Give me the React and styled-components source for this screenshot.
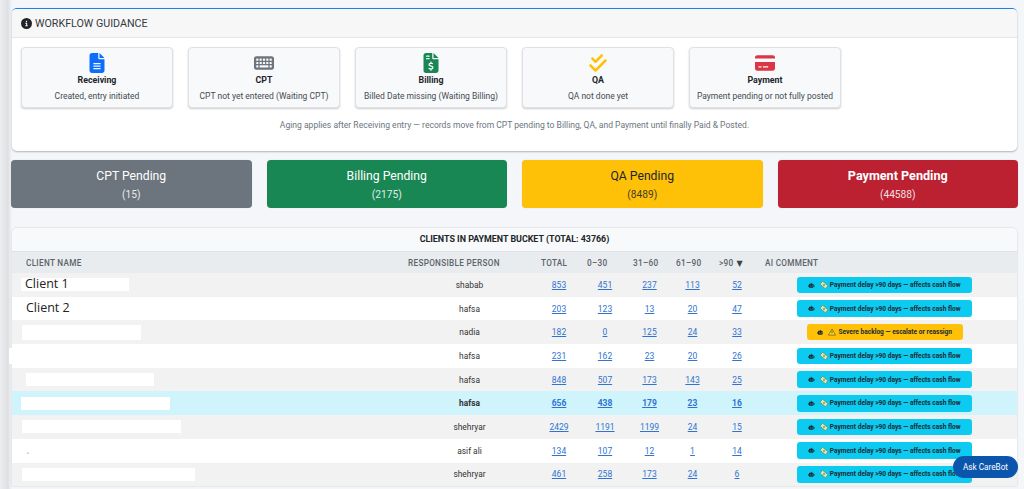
import React from "react";
import styled, { createGlobalStyle } from "styled-components";
import {
  FaCircleInfo,
  FaFileLines,
  FaKeyboard,
  FaFileInvoiceDollar,
  FaCheckDouble,
  FaCreditCard,
  FaRobot,
} from "react-icons/fa6";

const GlobalStyle = createGlobalStyle`
  html, body {
    margin: 0;
    height: 489px;
    overflow: hidden;
    background: #f4f6f9;
    font-family: Roboto, "Noto Sans", Arial, sans-serif;
    color: #212529;
  }
`;

const Page = styled.div`
  padding: 8px 6px 0 11px;
  height: 489px;
  box-sizing: border-box;
  background: linear-gradient(90deg, #eceef0 0, #dfe0e3 8px, #f4f6f9 12px);
`;

const GuideCard = styled.section`
  margin: 0 1px;
  height: 143px;
  box-sizing: border-box;
  background: #fff;
  border-top: 1.5px solid #1f7fec;
  border-radius: 5px;
  box-shadow: 0 1px 2px rgba(0, 0, 0, 0.28);
  overflow: hidden;
`;

const GuideHeader = styled.header`
  display: flex;
  align-items: center;
  gap: 3px;
  height: 28px;
  padding-left: 9px;
  background: #f7f7f8;
  border-bottom: 1px solid #e6e6e6;
  font-size: 10.7px;
  color: #343a40;
  svg {
    font-size: 11px;
    color: #212529;
  }
`;

const GuideBody = styled.div`
  padding: 9px;
`;

const Steps = styled.div`
  display: flex;
  gap: 15px;
`;

const Step = styled.div`
  width: 152px;
  height: 61px;
  box-sizing: border-box;
  padding-top: 5px;
  display: flex;
  flex-direction: column;
  align-items: center;
  background: #f8f9fa;
  border: 1px solid #dee2e6;
  border-radius: 4px;
  box-shadow: 0 1px 2px rgba(0, 0, 0, 0.2);
`;

const StepIcon = styled.div`
  height: 21px;
  font-size: 20px;
  line-height: 21px;
  color: ${(p) => p.$color};
`;

const StepTitle = styled.div`
  font-size: 8.8px;
  line-height: 13px;
  font-weight: 700;
`;

const StepText = styled.div`
  margin-top: 3px;
  font-size: 8.5px;
  line-height: 12px;
  color: #444b52;
  white-space: nowrap;
`;

const Note = styled.p`
  margin: 11px 0 0;
  text-align: center;
  font-size: 8.56px;
  line-height: 12px;
  color: #6c757d;
`;

const Tiles = styled.div`
  display: grid;
  grid-template-columns: repeat(4, 1fr);
  gap: 15px;
  margin-top: 9px;
`;

const Tile = styled.div`
  height: 48px;
  padding-top: 7px;
  box-sizing: border-box;
  text-align: center;
  border-radius: 4px;
  background: ${(p) => p.$bg};
  color: ${(p) => p.$fg};
  box-shadow: 0 0 1px rgba(0, 0, 0, 0.2);
`;

const TileTitle = styled.div`
  font-size: ${(p) => (p.$bold ? 12.6 : 12.2)}px;
  line-height: 18px;
  font-weight: ${(p) => (p.$bold ? 700 : 400)};
`;

const TileCount = styled.div`
  font-size: 10.2px;
  line-height: 20px;
  opacity: 0.85;
`;

const TableCard = styled.section`
  margin: 20px 1px 0;
  background: #fff;
  border-radius: 5px 5px 0 0;
  box-shadow: 0 0 2px rgba(0, 0, 0, 0.2);
`;

const TableTitle = styled.div`
  height: 23px;
  line-height: 23px;
  text-align: center;
  font-size: 8.9px;
  font-weight: 700;
  background: #f8f9fa;
  border-bottom: 1px solid #dee2e6;
  border-radius: 5px 5px 0 0;
`;

const Table = styled.table`
  width: 100%;
  table-layout: fixed;
  border-collapse: collapse;
`;

const HeadCell = styled.th`
  height: 21px;
  padding: 0 0 0 ${(p) => (p.$first ? 14 : 8)}px;
  text-align: left;
  background: #e9ecef;
  color: #5b636b;
  font-size: 8.2px;
  font-weight: 500;
  letter-spacing: 0.3px;
  white-space: nowrap;
`;

const SortArrow = styled.span`
  margin-left: 3px;
  font-family: "DejaVu Sans", sans-serif;
  font-size: 8px;
  color: #3d4349;
`;

const Row = styled.tr`
  height: 23.7px;
  background: ${(p) => (p.$active ? "#cff4fc" : p.$striped ? "#f2f2f2" : "#fff")};
  font-weight: ${(p) => (p.$active ? 700 : 400)};
`;

const NameCell = styled.td`
  padding: 0;
  overflow: visible;
`;

const Redacted = styled.div`
  box-sizing: border-box;
  width: ${(p) => p.$w}px;
  height: ${(p) => p.$h || 13}px;
  margin-left: ${(p) => p.$x}px;
  padding-left: ${(p) => p.$pad || 0}px;
  background: ${(p) => (p.$clear ? "transparent" : "#fff")};
  font-family: "Open Sans", "Noto Sans", sans-serif;
  font-size: 12.5px;
  line-height: 12px;
  color: ${(p) => p.$tint || "#222"};
  white-space: nowrap;
`;

const Person = styled.td`
  padding: 0 5px 0 11px;
  text-align: center;
  font-size: 8.4px;
  color: #333;
`;

const Num = styled.td`
  padding: 0 5px 0 11px;
  text-align: center;
  font-size: 8.5px;
`;

const NumLink = styled.a`
  color: #2f74d0;
  text-decoration: underline;
`;

const AiCell = styled.td`
  padding: 0 13px 0 8px;
`;

const Badge = styled.span`
  display: flex;
  align-items: center;
  justify-content: center;
  height: 16.5px;
  width: ${(p) => p.$w}px;
  margin: 0 auto;
  border-radius: 3px;
  background: ${(p) => p.$bg};
  color: #1b2b33;
  font-size: 6.6px;
  font-weight: 700;
  white-space: nowrap;
  svg {
    flex: none;
  }
`;

const Glyph = styled.span`
  display: flex;
  margin: 0 2px 0 5px;
`;

const AskBot = styled.button`
  position: fixed;
  left: 953px;
  top: 456px;
  width: 65px;
  height: 22px;
  padding: 0;
  border: none;
  border-radius: 11px;
  background: #0b55ad;
  color: #fff;
  font-family: inherit;
  font-size: 8.2px;
`;

const steps = [
  { title: "Receiving", text: "Created, entry initiated", color: "#0d6efd", Icon: FaFileLines },
  { title: "CPT", text: "CPT not yet entered (Waiting CPT)", color: "#6c757d", Icon: FaKeyboard },
  { title: "Billing", text: "Billed Date missing (Waiting Billing)", color: "#198754", Icon: FaFileInvoiceDollar },
  { title: "QA", text: "QA not done yet", color: "#ffc107", Icon: FaCheckDouble },
  { title: "Payment", text: "Payment pending or not fully posted", color: "#dc3545", Icon: FaCreditCard },
];

const tiles = [
  { title: "CPT Pending", count: 15, bg: "#6c757d", fg: "#fff" },
  { title: "Billing Pending", count: 2175, bg: "#198754", fg: "#fff" },
  { title: "QA Pending", count: 8489, bg: "#ffc107", fg: "#212529" },
  { title: "Payment Pending", count: 44588, bg: "#bb2130", fg: "#fff", bold: true },
];

const colWidths = [388, 133, 46, 46, 43, 43, 46, 260];
const headers = ["CLIENT NAME", "RESPONSIBLE PERSON", "TOTAL", "0–30", "31–60", "61–90", ">90", "AI COMMENT"];

const rows = [
  { name: "Client 1", x: 9, w: 108, pad: 4, person: "shabab", nums: [853, 451, 237, 113, 52] },
  { name: "Client 2", x: 14, w: 90, clear: true, person: "hafsa", nums: [203, 123, 13, 20, 47] },
  { x: 10, w: 119, h: 15, person: "nadia", nums: [182, 0, 125, 24, 33], severe: true },
  { x: -3, w: 120, h: 16, person: "hafsa", nums: [231, 162, 23, 20, 26] },
  { x: 14, w: 128, person: "hafsa", nums: [848, 507, 173, 143, 25] },
  { x: 9, w: 149, person: "hafsa", nums: [656, 438, 179, 23, 16], active: true },
  { x: 10, w: 159, person: "shehryar", nums: [2429, 1191, 1199, 24, 15] },
  { name: ".", tint: "#9ec5fe", x: 14, w: 10, clear: true, person: "asif ali", nums: [134, 107, 12, 1, 14] },
  { x: 10, w: 173, person: "shehryar", nums: [461, 258, 173, 24, 6] },
];

// small banknote standing in for the emoji in the comment badge
const MoneyGlyph = () => (
  <svg width="8" height="8" viewBox="0 0 8 8">
    <rect x="0.5" y="2" width="7" height="4" rx="0.5" transform="rotate(40 4 4)" fill="#e6e2b8" stroke="#5f8f66" strokeWidth="0.7" />
    <circle cx="4" cy="4" r="1" fill="#6fa56f" />
  </svg>
);

const WarnGlyph = () => (
  <svg width="8" height="8" viewBox="0 0 9 8">
    <path d="M4.5 0.6 8.5 7.5H0.5Z" fill="#ffd83d" stroke="#5c5200" strokeWidth="0.7" strokeLinejoin="round" />
    <path d="M4.5 2.8V5.2M4.5 5.9V6.6" stroke="#333" strokeWidth="0.8" />
  </svg>
);

const App = () => (
  <Page>
    <GlobalStyle />
    <GuideCard>
      <GuideHeader>
        <FaCircleInfo />
        WORKFLOW GUIDANCE
      </GuideHeader>
      <GuideBody>
        <Steps>
          {steps.map(({ title, text, color, Icon }) => (
            <Step key={title}>
              <StepIcon $color={color}>
                <Icon />
              </StepIcon>
              <StepTitle>{title}</StepTitle>
              <StepText>{text}</StepText>
            </Step>
          ))}
        </Steps>
        <Note>
          Aging applies after Receiving entry — records move from CPT pending to Billing, QA, and Payment until finally Paid &amp; Posted.
        </Note>
      </GuideBody>
    </GuideCard>

    <Tiles>
      {tiles.map((t) => (
        <Tile key={t.title} $bg={t.bg} $fg={t.fg}>
          <TileTitle $bold={t.bold}>{t.title}</TileTitle>
          <TileCount>({t.count})</TileCount>
        </Tile>
      ))}
    </Tiles>

    <TableCard>
      <TableTitle>CLIENTS IN PAYMENT BUCKET (TOTAL: 43766)</TableTitle>
      <Table>
        <colgroup>
          {colWidths.map((w, i) => (
            <col key={i} width={w} />
          ))}
        </colgroup>
        <thead>
          <tr>
            {headers.map((h, i) => (
              <HeadCell key={h} $first={i === 0}>
                {h}
                {h === ">90" && <SortArrow>▼</SortArrow>}
              </HeadCell>
            ))}
          </tr>
        </thead>
        <tbody>
          {rows.map((r, i) => (
            <Row key={i} $striped={i % 2 === 0} $active={r.active}>
              <NameCell>
                <Redacted $x={r.x} $w={r.w} $h={r.h} $pad={r.pad} $clear={r.clear} $tint={r.tint}>
                  {r.name}
                </Redacted>
              </NameCell>
              <Person>{r.person}</Person>
              {r.nums.map((n, j) => (
                <Num key={j}>
                  <NumLink>{n}</NumLink>
                </Num>
              ))}
              <AiCell>
                {r.severe ? (
                  <Badge $bg="#ffc107" $w={156}>
                    <FaRobot size={6.5} />
                    <Glyph>
                      <WarnGlyph />
                    </Glyph>
                    Severe backlog — escalate or reassign
                  </Badge>
                ) : (
                  <Badge $bg="#0dcaf0" $w={175}>
                    <FaRobot size={6.5} />
                    <Glyph>
                      <MoneyGlyph />
                    </Glyph>
                    Payment delay &gt;90 days — affects cash flow
                  </Badge>
                )}
              </AiCell>
            </Row>
          ))}
        </tbody>
      </Table>
    </TableCard>
    <AskBot>Ask CareBot</AskBot>
  </Page>
);

export default App;
